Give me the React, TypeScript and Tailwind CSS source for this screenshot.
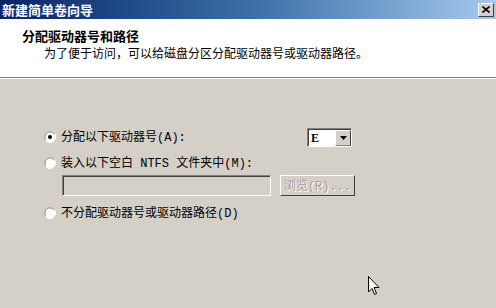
import React from "react";

const font = { fontFamily: '"Noto Sans CJK SC", "Liberation Sans", sans-serif' };
const mono = { fontFamily: '"Liberation Mono", "Noto Sans CJK SC", monospace' };

function Radio({ checked }: { checked?: boolean }) {
  return (
    <span className="relative inline-block w-[12px] h-[12px] shrink-0">
      <svg width="12" height="12" viewBox="0 0 12 12" className="block">
        <circle cx="6" cy="6" r="5.5" fill="#ffffff" stroke="#d4d0c8" strokeWidth="0.2" />
        <path d="M10.5 3.5 A5.2 5.2 0 0 0 1.5 3.5 A5.2 5.2 0 0 0 1.5 8.5" stroke="#808080" fill="none" strokeWidth="1" />
        <path d="M2 9.5 A5 5 0 0 0 10 9.5 A5 5 0 0 0 10.5 2.5" stroke="#ffffff" fill="none" strokeWidth="1" />
        {checked && <circle cx="6" cy="6" r="2" fill="#000" />}
      </svg>
    </span>
  );
}

export default function App() {
  return (
    <div className="w-[496px] h-[308px] bg-[#d4d0c8] flex flex-col overflow-hidden relative" style={font}>
      {/* title bar */}
      <div className="h-[19px] flex items-center justify-between pl-[2px] pr-[2px] bg-gradient-to-r from-[#0a246a] via-[#3a6ea5] to-[#a6caf0]">
        <span className="text-white text-[13px] font-bold leading-none">新建简单卷向导</span>
        <div className="w-[16px] h-[14px] bg-[#d4d0c8] border border-t-white border-l-white border-r-[#404040] border-b-[#404040] flex items-center justify-center">
          <svg width="8" height="7" viewBox="0 0 8 7">
            <path d="M0.5 0.5 L7.5 6.5 M7.5 0.5 L0.5 6.5" stroke="#000" strokeWidth="1.6" />
          </svg>
        </div>
      </div>
      {/* header */}
      <div className="h-[58px] bg-white flex flex-col pl-[22px] pt-[9px]">
        <div className="text-[13px] font-bold leading-[15px] text-black">分配驱动器号和路径</div>
        <div className="text-[12px] leading-[14px] text-black pl-[22px] mt-[3px]">为了便于访问，可以给磁盘分区分配驱动器号或驱动器路径。</div>
      </div>
      <div className="h-[1px] bg-[#808080]" />
      <div className="h-[1px] bg-white" />
      {/* body */}
      <div className="flex flex-col pl-[44px] pt-[48px] text-[12px] text-black">
        <div className="flex items-center h-[20px]">
          <Radio checked />
          <span className="ml-[5px] w-[246px] leading-none">分配以下驱动器号<span style={mono}>(A):</span></span>
          <div className="w-[45px] h-[19px] bg-white border border-t-[#808080] border-l-[#808080] border-r-white border-b-white flex">
            <div className="flex-1 border-t border-l border-[#404040] flex items-center pl-[2px]">
              <span style={{ fontFamily: '"Liberation Serif", serif' }} className="text-[12px] font-bold leading-none">E</span>
            </div>
            <div className="w-[16px] border-t border-[#404040] flex">
              <div className="flex-1 bg-[#d4d0c8] border border-t-white border-l-white border-r-[#404040] border-b-[#808080] flex items-center justify-center">
                <svg width="7" height="4" viewBox="0 0 7 4"><path d="M0 0 H7 L3.5 4 Z" fill="#000" /></svg>
              </div>
            </div>
          </div>
        </div>
        <div className="flex items-center h-[20px] mt-[6px]">
          <Radio />
          <span className="ml-[5px] leading-none">装入以下空白<span style={mono}> NTFS </span>文件夹中<span style={mono}>(M):</span></span>
        </div>
        <div className="flex items-center ml-[18px] mt-[2px] h-[21px]">
          <div className="w-[209px] h-[21px] bg-[#d4d0c8] border border-t-[#808080] border-l-[#808080] border-r-white border-b-white">
            <div className="w-full h-full border-t border-l border-[#404040]" />
          </div>
          <div className="ml-[9px] w-[75px] h-[21px] border border-t-white border-l-white border-r-[#404040] border-b-[#404040] flex items-center justify-center">
            <span className="text-[#a0a0a0] leading-none" style={{ textShadow: "1px 1px 0 #ffffff" }}>浏览<span style={mono}>(R)...</span></span>
          </div>
        </div>
        <div className="flex items-center h-[20px] mt-[7px]">
          <Radio />
          <span className="ml-[5px] leading-none">不分配驱动器号或驱动器路径<span style={mono}>(D)</span></span>
        </div>
      </div>
      {/* mouse cursor */}
      <svg className="absolute left-[368px] top-[276px]" width="12" height="20" viewBox="0 0 12 20">
        <path d="M0.5 0.5 V16 L4 12.5 L6.5 18.5 L8.5 17.5 L6 11.5 H11 Z" fill="#fff" stroke="#000" strokeWidth="1" />
      </svg>
    </div>
  );
}
